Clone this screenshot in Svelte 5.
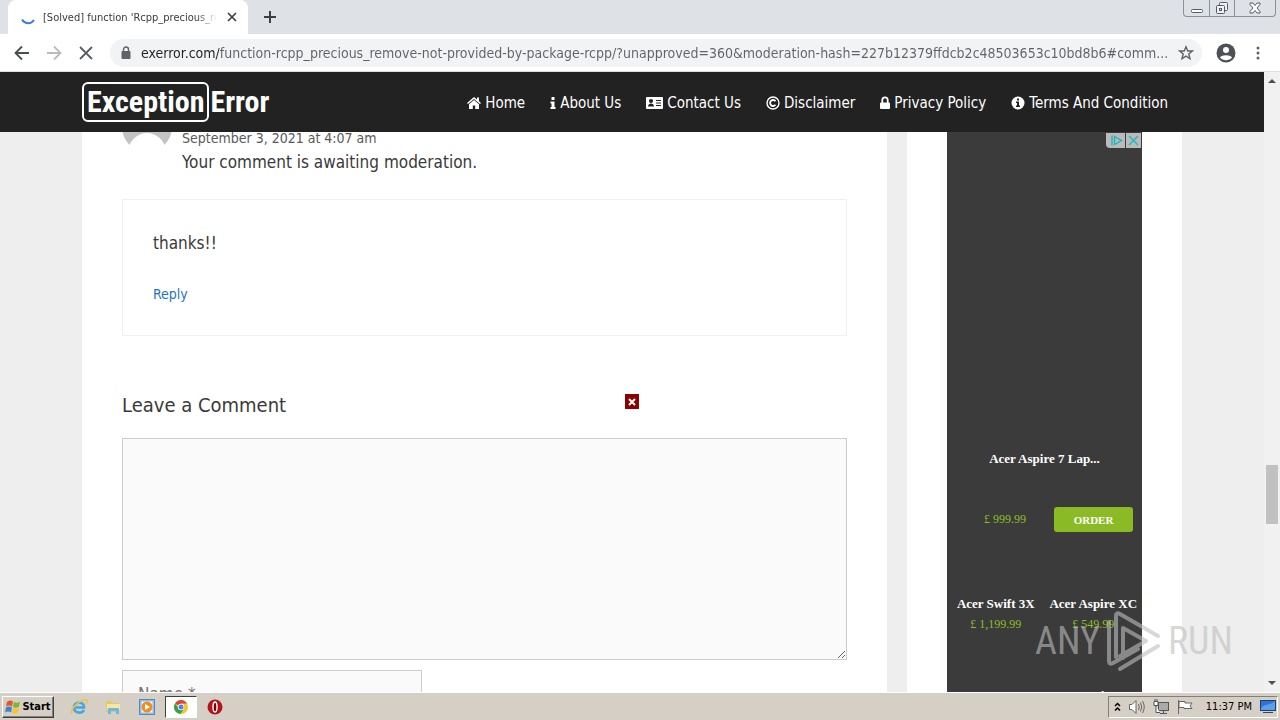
<script lang="ts">
	const navLinks = [
		{ icon: 'home', label: 'Home' },
		{ icon: 'info', label: 'About Us' },
		{ icon: 'card', label: 'Contact Us' },
		{ icon: 'copyright', label: 'Disclaimer' },
		{ icon: 'lock', label: 'Privacy Policy' },
		{ icon: 'info-circle', label: 'Terms And Condition' }
	];

	const products = [
		{ name: 'Acer Swift 3X', price: '£ 1,199.99' },
		{ name: 'Acer Aspire XC', price: '£ 549.99' }
	];

	let url = $state(
		'exerror.com/function-rcpp_precious_remove-not-provided-by-package-rcpp/?unapproved=360&moderation-hash=227b12379ffdcb2c48503653c10bd8b6#comm...'
	);
	let comment = $state('');
	let name = $state('');
</script>

<div class="desktop">
	<header class="tab-strip">
		<div class="tab">
			<svg class="spinner" viewBox="0 0 16 16" fill="none" stroke="#3b78e0" stroke-width="2">
				<path d="M2 10.5A7 7 0 0 0 14 11" />
			</svg>
			<span class="tab-title">[Solved] function 'Rcpp_precious_remove'</span>
			<button class="icon-btn" aria-label="Close tab">
				<svg width="10" height="10" viewBox="0 0 10 10" stroke="#3c4043" stroke-width="1.7">
					<path d="M1 1L9 9M9 1L1 9" />
				</svg>
			</button>
		</div>
		<button class="icon-btn new-tab" aria-label="New tab">
			<svg width="12" height="12" viewBox="0 0 12 12" stroke="#3c4043" stroke-width="2">
				<path d="M6 0V12M0 6H12" />
			</svg>
		</button>
		<div class="window-controls">
			<button aria-label="Minimize">
				<svg width="12" height="12" viewBox="0 0 12 12" fill="#fff" stroke="#555b66">
					<rect x="0.5" y="7.5" width="11" height="3" rx="1" />
				</svg>
			</button>
			<button aria-label="Restore">
				<svg width="14" height="14" viewBox="0 0 14 14" fill="#eef0f4" stroke="#555b66">
					<rect x="4.5" y="1.5" width="8" height="8" rx="1" />
					<rect x="1.5" y="4.5" width="8" height="8" rx="1" />
					<rect x="4.5" y="7.5" width="2" height="2" />
				</svg>
			</button>
			<button class="wide" aria-label="Close">
				<svg width="12" height="12" viewBox="0 0 12 12" fill="#fff" stroke="#555b66">
					<path d="M1 1H4L6 3.5L8 1H11V2.5L8 6L11 9.5V11H8L6 8.5L4 11H1V9.5L4 6L1 2.5Z" />
				</svg>
			</button>
		</div>
	</header>

	<div class="toolbar">
		<button class="icon-btn" aria-label="Back">
			<svg width="16" height="16" viewBox="0 0 16 16" fill="none" stroke="#4a4d51" stroke-width="1.8">
				<path d="M15 8H2M8 1.5L1.5 8L8 14.5" />
			</svg>
		</button>
		<button class="icon-btn" aria-label="Forward">
			<svg width="16" height="16" viewBox="0 0 16 16" fill="none" stroke="#b9bbbe" stroke-width="1.8">
				<path d="M1 8H14M8 1.5L14.5 8L8 14.5" />
			</svg>
		</button>
		<button class="icon-btn" aria-label="Stop loading">
			<svg width="16" height="16" viewBox="0 0 16 16" fill="none" stroke="#5a5d61" stroke-width="1.8">
				<path d="M2 2L14 14M14 2L2 14" />
			</svg>
		</button>
		<div class="address">
			<svg width="10" height="14" viewBox="0 0 10 14">
				<path d="M2.5 6V3.5a2.5 2.5 0 0 1 5 0V6" fill="none" stroke="#5f6368" stroke-width="1.4" />
				<rect x="0.5" y="5" width="9" height="8" rx="1" fill="#5f6368" />
			</svg>
			<input type="text" aria-label="Address" bind:value={url} />
			<button class="icon-btn" aria-label="Bookmark">
				<svg width="16" height="16" viewBox="0 0 16 16" fill="none" stroke="#5f6368" stroke-width="1.4">
					<path d="M8 1.8L9.8 6H14.3L10.8 9L12 13.8L8 11.2L4 13.8L5.2 9L1.7 6H6.2Z" />
				</svg>
			</button>
		</div>
		<button class="icon-btn" aria-label="Profile">
			<svg width="20" height="20" viewBox="0 0 20 20">
				<circle cx="10" cy="10" r="9.5" fill="#4d5054" />
				<circle cx="10" cy="7" r="3" fill="#fff" />
				<path d="M4 14.5C5.5 11.5 14.5 11.5 16 14.5C13 18 7 18 4 14.5Z" fill="#fff" />
			</svg>
		</button>
		<button class="icon-btn" aria-label="Menu">
			<svg width="4" height="14" viewBox="0 0 4 14" fill="#5f6368">
				<circle cx="2" cy="2" r="1.5" /><circle cx="2" cy="7" r="1.5" /><circle cx="2" cy="12" r="1.5" />
			</svg>
		</button>
	</div>

	<div class="viewport">
		<div class="page">
			<div class="site-header">
				<div class="container header-inner">
					<a class="logo" href="#home"><span class="boxed">Exception</span><span>Error</span></a>
					<nav>
						{#each navLinks as link}
							<a href="#{link.icon}">
								{#if link.icon === 'home'}
									<svg width="14" height="14" viewBox="0 0 14 14" fill="#fff">
										<path d="M7 1L0 7L1 8L7 3L13 8L14 7L12 5.3V1.5H10V3.6Z" />
										<path d="M7 4L2 8.2V13H5.8V9.5H8.2V13H12V8.2Z" />
									</svg>
								{:else if link.icon === 'info'}
									<svg width="6" height="14" viewBox="0 0 6 14" fill="#fff">
										<path d="M1.5 1H4.5V4H1.5ZM0.5 5.5H4.5V11H5.5V13H0.5V11H1.5V7.5H0.5Z" />
									</svg>
								{:else if link.icon === 'card'}
									<svg width="17" height="14" viewBox="0 0 17 14">
										<rect y="1" width="17" height="12" rx="1" fill="#fff" />
										<circle cx="5" cy="5" r="2" fill="#222" />
										<path d="M2 10.5C2 6.5 8 6.5 8 10.5Z" fill="#222" />
										<path d="M10 4.5H15M10 7H15M10 9.5H15" stroke="#222" />
									</svg>
								{:else if link.icon === 'copyright'}
									<svg width="14" height="14" viewBox="0 0 14 14" fill="none" stroke="#fff" stroke-width="1.4">
										<circle cx="7" cy="7" r="6" />
										<path d="M9.5 5.2A3 3 0 1 0 9.5 8.8" stroke-width="1.8" />
									</svg>
								{:else if link.icon === 'lock'}
									<svg width="10" height="14" viewBox="0 0 10 14">
										<path d="M2.3 7V4a2.7 2.7 0 0 1 5.4 0V7" fill="none" stroke="#fff" stroke-width="1.8" />
										<rect y="6.5" width="10" height="6.5" rx="1" fill="#fff" />
									</svg>
								{:else}
									<svg width="14" height="14" viewBox="0 0 14 14">
										<circle cx="7" cy="7" r="6.5" fill="#fff" />
										<path d="M6 2.5H8V4.5H6ZM5 5.5H8V9.5H9V11H5V9.5H6V7H5Z" fill="#222" />
									</svg>
								{/if}
								<span>{link.label}</span>
							</a>
						{/each}
					</nav>
				</div>
			</div>

			<div class="container columns">
				<main>
					<div class="comment-meta">
						<svg class="avatar" viewBox="0 0 50 50">
							<circle cx="25" cy="25" r="25" fill="#c3c3c3" />
							<circle cx="25" cy="19" r="10" fill="#fff" />
							<path d="M5 52C8 24 42 24 45 52Z" fill="#fff" />
						</svg>
						<div>
							<time>September 3, 2021 at 4:07 am</time>
							<p class="awaiting">Your comment is awaiting moderation.</p>
						</div>
					</div>
					<div class="comment-body">
						<p>thanks!!</p>
						<a href="#respond">Reply</a>
					</div>
					<div class="respond-title">
						<h3>Leave a Comment</h3>
						<button class="ad-close" aria-label="Close ad">
							<svg width="8" height="8" viewBox="0 0 8 8" stroke="#fff" stroke-width="2">
								<path d="M1 1L7 7M7 1L1 7" />
							</svg>
						</button>
					</div>
					<form>
						<textarea aria-label="Comment" bind:value={comment}></textarea>
						<input type="text" aria-label="Name" placeholder="Name *" bind:value={name} />
					</form>
				</main>

				<aside>
					<div class="ad">
						<div class="ad-badges">
							<button aria-label="Ad choices">
								<svg width="16" height="13" viewBox="0 0 16 13" fill="none" stroke="#20b5c0" stroke-width="1.4">
									<path d="M4 1.5V11.5M6.5 2.5V10.5L13.5 6.5Z" />
								</svg>
							</button>
							<button aria-label="Close">
								<svg width="13" height="13" viewBox="0 0 13 13" stroke="#20b5c0" stroke-width="1.4">
									<path d="M2 2L11 11M11 2L2 11" />
								</svg>
							</button>
						</div>
						<strong class="ad-title">Acer Aspire 7 Lap...</strong>
						<div class="ad-order">
							<span class="price">£ 999.99</span>
							<button class="order">ORDER</button>
						</div>
						<div class="ad-products">
							{#each products as product}
								<div class="product">
									<strong>{product.name}</strong>
									<span class="price">{product.price}</span>
								</div>
							{/each}
						</div>
						<div class="ad-products next">
							<strong>Acer</strong>
							<strong>Acer Spin SP</strong>
						</div>
					</div>
				</aside>
			</div>
		</div>

		<div class="scrollbar">
			<svg width="8" height="4" viewBox="0 0 8 4" fill="#505050"><path d="M0 4L4 0L8 4Z" /></svg>
			<div class="thumb"></div>
			<svg width="8" height="4" viewBox="0 0 8 4" fill="#505050"><path d="M0 0L4 4L8 0Z" /></svg>
		</div>

		<div class="watermark">
			<span>ANY</span>
			<svg width="56" height="62" viewBox="0 0 56 62" fill="none" stroke="currentColor" stroke-width="4" stroke-linejoin="round" stroke-linecap="round">
				<path d="M10 47V6Q10 2 14 4L52 26M3 12V51Q3 55 7 53L32 39M17 48V18L40 31L14 46M14 59L52 36" />
			</svg>
			<span>RUN</span>
		</div>
	</div>

	<footer class="taskbar">
		<button class="start">
			<svg width="16" height="16" viewBox="0 0 16 16">
				<path d="M2 3C4 1 6 1 8 2.5L7 7.5C5 6 3 6 1 7.5Z" fill="#e8542b" />
				<path d="M9 2.8C11 4 13 4 15 2.5L14 7.5C12 9 10 9 8 7.8Z" fill="#7db72f" />
				<path d="M1 8.5C3 7 5 7 7 8.5L6 13.5C4 12 2 12 0 13.5Z" fill="#3a83d6" />
				<path d="M8 9C10 10 12 10 14 8.7L13 13.5C11 15 9 15 7 14Z" fill="#f8c42c" />
			</svg>
			<span>Start</span>
		</button>
		<div class="launchers">
			<button aria-label="Internet Explorer">
				<svg width="18" height="18" viewBox="0 0 18 18" fill="none">
					<path d="M4 9.5H14C14.5 3 4 3 4 9.5C4 15.5 12 16 14 12" stroke="#43a7e0" stroke-width="2.6" />
					<path d="M2 16C-1 12 10 1 16 2C18 2.5 17 5 16 6" stroke="#e9c34a" stroke-width="1.5" />
				</svg>
			</button>
			<button aria-label="Explorer">
				<svg width="18" height="18" viewBox="0 0 18 18">
					<path d="M2 3H7L8 5H15V14H2Z" fill="#e5c765" />
					<path d="M3 6H16V12H3Z" fill="#f6e7a4" />
					<path d="M4 16V10H15V16H12V13H7V16Z" fill="#6fb8e2" />
				</svg>
			</button>
			<button aria-label="Media Player">
				<svg width="16" height="16" viewBox="0 0 16 16">
					<rect x="0.5" y="0.5" width="15" height="15" fill="#8dbde8" stroke="#4d8bc7" />
					<rect x="2.5" y="2.5" width="11" height="11" fill="#f4f8fc" />
					<circle cx="8" cy="8" r="5.5" fill="#f38b1d" />
					<path d="M6 5V11L11 8Z" fill="#fff" />
				</svg>
			</button>
			<button class="active" aria-label="Chrome">
				<svg width="14" height="14" viewBox="0 0 14 14">
					<circle cx="7" cy="7" r="7" fill="#f6c52c" />
					<path d="M7 7L1 3.4A7 7 0 0 1 13.1 3.6H7Z" fill="#dd4437" />
					<path d="M1 3.4A7 7 0 0 0 6.5 14L10 8.5L5 9Z" fill="#35a050" />
					<circle cx="7" cy="7" r="3.2" fill="#fff" />
					<circle cx="7" cy="7" r="2.5" fill="#4385f3" />
				</svg>
			</button>
			<button aria-label="Opera">
				<svg width="16" height="16" viewBox="0 0 16 16">
					<circle cx="8" cy="8" r="7.5" fill="#b5131a" />
					<ellipse cx="8" cy="8" rx="2" ry="5" fill="#6b0709" stroke="#fff" stroke-width="1.4" />
				</svg>
			</button>
		</div>
		<div class="tray">
			<svg width="7" height="10" viewBox="0 0 7 10" fill="none" stroke="#000" stroke-width="1.5">
				<path d="M1 4L3.5 1.5L6 4M1 8.5L3.5 6L6 8.5" />
			</svg>
			<svg width="16" height="16" viewBox="0 0 16 16" fill="#fff" stroke="#666">
				<path d="M0.5 5.5H3L7 1.5V14.5L3 10.5H0.5Z" />
				<path d="M9.5 5Q11 8 9.5 11M11.5 3.5Q14 8 11.5 12.5M13.5 2Q17 8 13.5 14" fill="none" />
			</svg>
			<svg width="16" height="16" viewBox="0 0 16 16" fill="#fff" stroke="#555">
				<rect x="5.5" y="3.5" width="10" height="8" fill="#aaa" />
				<path d="M7 14.5H14M10.5 12V14M1 2.5H5V6.5H1ZM2 0V2M4 0V2M3 7V13.5H7" />
			</svg>
			<svg width="16" height="16" viewBox="0 0 16 16" fill="#fff" stroke="#666">
				<path d="M1.5 1V15M2 2.5H8V4H15L13 7L15 9.5H7V8.5H2Z" />
			</svg>
			<span class="clock">11:37 PM</span>
			<svg width="16" height="14" viewBox="0 0 16 14">
				<rect x="0.5" y="0.5" width="15" height="10" fill="#2f74d0" stroke="#16407f" />
				<path d="M1 8C5 3 10 6 15 1V10H1Z" fill="#5da0ea" />
				<path d="M3 12.5H13" stroke="#444" />
			</svg>
		</div>
	</footer>
</div>

<style>
	:global(body) {
		margin: 0;
		overflow: hidden;
	}

	.desktop {
		display: flex;
		flex-direction: column;
		height: 100vh;
		color: #3a3a3a;
		font-family: Tahoma, 'DejaVu Sans Condensed', 'Open Sans', sans-serif;
	}

	button {
		padding: 0;
		border: none;
		background: none;
		font-family: inherit;
	}

	svg {
		flex: none;
	}

	.icon-btn {
		display: flex;
		align-items: center;
		justify-content: center;
		width: 16px;
		height: 16px;
	}

	.tab-strip {
		display: flex;
		align-items: center;
		height: 34px;
		background: #dee1e6;
	}

	.tab {
		box-sizing: border-box;
		display: flex;
		align-items: center;
		gap: 7px;
		width: 240px;
		height: 34px;
		margin-left: 8px;
		padding: 0 8px 0 12px;
		background: #fff;
		border-radius: 8px 8px 0 0;
	}

	.spinner {
		width: 16px;
		height: 16px;
	}

	.tab-title {
		flex: 1;
		overflow: hidden;
		font-size: 11px;
		white-space: nowrap;
		mask-image: linear-gradient(to right, #000 88%, transparent);
	}

	.new-tab {
		margin-left: 14px;
	}

	.window-controls {
		display: flex;
		align-self: flex-start;
		height: 16px;
		margin: 0 4px 0 auto;
		border: 1px solid #8b9099;
		border-top: none;
		border-radius: 0 0 4px 4px;
	}

	.window-controls button {
		display: flex;
		align-items: center;
		justify-content: center;
		width: 25px;
	}

	.window-controls button + button {
		border-left: 1px solid #8b9099;
	}

	.window-controls .wide {
		width: 41px;
	}

	.toolbar {
		display: flex;
		align-items: center;
		gap: 16px;
		height: 37px;
		padding: 0 14px;
		border-bottom: 1px solid #dcdde0;
		background: #fff;
	}

	.address {
		flex: 1;
		display: flex;
		align-items: center;
		gap: 10px;
		height: 28px;
		padding: 0 8px 0 11px;
		border-radius: 14px;
		background: #f1f3f4;
	}

	/* the host part of the URL is darker than the rest */
	.address input {
		flex: 1;
		min-width: 0;
		padding: 0;
		border: none;
		outline: none;
		font-family: inherit;
		font-size: 14px;
		color: transparent;
		background: linear-gradient(to right, #202124 78px, #5f6368 78px);
		background-clip: text;
	}

	.viewport {
		position: relative;
		flex: 1;
		display: flex;
		min-height: 0;
	}

	.page {
		flex: 1;
		display: flex;
		flex-direction: column;
		overflow: hidden;
		background: #eee;
	}

	.container {
		box-sizing: border-box;
		width: 100%;
		max-width: 1100px;
		margin: 0 auto;
	}

	.site-header {
		position: relative;
		z-index: 1;
		flex: none;
		background: #222;
	}

	.header-inner {
		display: flex;
		align-items: center;
		justify-content: space-between;
		height: 60px;
		padding-right: 14px;
	}

	.logo {
		display: flex;
		align-items: center;
		gap: 1px;
		color: #fff;
		font-family: 'Liberation Sans Narrow', 'Roboto Condensed', 'Liberation Sans', sans-serif;
		font-size: 30px;
		font-weight: 700;
		line-height: 36px;
		text-decoration: none;
	}

	.boxed {
		padding: 0 3px;
		border: 2px solid #fff;
		border-radius: 6px;
	}

	nav {
		display: flex;
		gap: 25px;
		padding-top: 2px;
	}

	nav a {
		display: flex;
		align-items: center;
		gap: 4px;
		color: #fff;
		font-size: 15px;
		text-decoration: none;
		white-space: nowrap;
	}

	.columns {
		display: flex;
		gap: 20px;
		height: 100%;
		min-height: 0;
	}

	main {
		flex: 1;
		min-width: 0;
		padding: 0 40px;
		background: #fff;
	}

	/* the page is scrolled, so the first row starts under the header */
	.comment-meta {
		display: flex;
		gap: 10px;
		margin-top: -30px;
	}

	.avatar {
		width: 50px;
		height: 50px;
	}

	.comment-meta time {
		display: block;
		padding-top: 24px;
		font-size: 14px;
		line-height: 24px;
		color: #595959;
	}

	.awaiting {
		margin: 0;
		font-size: 17px;
		line-height: 24px;
	}

	.comment-body {
		margin-top: 25px;
		padding: 30px;
		border: 1px solid #f0f0f0;
	}

	.comment-body p {
		margin: 0 0 27px;
		font-size: 17px;
		line-height: 26px;
	}

	.comment-body a {
		display: block;
		font-size: 14px;
		line-height: 22px;
		color: #1e73be;
		text-decoration: none;
	}

	.respond-title {
		position: relative;
		margin: 54px 0 18px;
	}

	h3 {
		margin: 0;
		font-size: 20px;
		font-weight: 400;
		line-height: 30px;
	}

	.ad-close {
		position: absolute;
		top: 4px;
		left: 503px;
		display: flex;
		align-items: center;
		justify-content: center;
		width: 14px;
		height: 15px;
		background: #8b0000;
	}

	form {
		display: flex;
		flex-direction: column;
		align-items: flex-start;
		gap: 10px;
	}

	textarea,
	form input {
		box-sizing: border-box;
		border: 1px solid #ccc;
		border-radius: 0;
		background: #fafafa;
		color: #666;
		font-family: inherit;
		font-size: 17px;
	}

	textarea {
		width: 100%;
		height: 222px;
		padding: 10px 15px;
	}

	form input {
		width: 300px;
		height: 48px;
		padding: 10px 15px;
	}

	aside {
		box-sizing: border-box;
		width: 275px;
		padding: 0 40px;
		background: #fff;
	}

	.ad {
		height: 100%;
		background: #3b3b3b;
		color: #fff;
		font-family: 'Liberation Serif', serif;
		font-size: 13px;
		text-align: center;
		overflow: hidden;
	}

	.ad-badges {
		display: flex;
		justify-content: flex-end;
		gap: 1px;
		padding: 1px 1px 0 0;
	}

	.ad-badges button {
		display: flex;
		align-items: center;
		justify-content: center;
		width: 19px;
		height: 15px;
		background: #bbb;
	}

	.ad-badges button:first-child {
		border-bottom-left-radius: 4px;
	}

	.ad-badges button + button {
		width: 15px;
	}

	.ad-title {
		display: block;
		margin-top: 301px;
		line-height: 20px;
	}

	.ad-order {
		display: flex;
		align-items: center;
		justify-content: flex-end;
		gap: 28px;
		margin-top: 38px;
		padding-right: 9px;
	}

	.price {
		color: #8dbf27;
		font-size: 12px;
	}

	.order {
		width: 79px;
		height: 25px;
		border-radius: 3px;
		background: #8aba24;
		color: #fff;
		font-size: 11px;
		font-weight: 700;
	}

	.ad-products {
		display: grid;
		grid-template-columns: 1fr 1fr;
		line-height: 20px;
		margin-top: 62px;
		white-space: nowrap;
	}

	.product {
		display: flex;
		flex-direction: column;
		align-items: center;
	}

	.ad-products.next {
		margin-top: 52px;
	}

	.scrollbar {
		display: flex;
		flex-direction: column;
		align-items: center;
		width: 16px;
		padding: 7px 0;
		box-sizing: border-box;
		background: #f1f1f1;
	}

	.scrollbar svg:last-child {
		margin-top: auto;
	}

	.thumb {
		width: 12px;
		height: 59px;
		margin-top: 382px;
		background: #c1c1c1;
	}

	.watermark {
		position: absolute;
		right: 47px;
		bottom: 20px;
		z-index: 2;
		display: flex;
		align-items: center;
		gap: 6px;
		color: rgba(190, 190, 190, 0.6);
		font-family: 'Liberation Sans Narrow', 'Roboto Condensed', 'Liberation Sans', sans-serif;
		font-size: 38px;
		pointer-events: none;
	}

	.taskbar {
		box-sizing: border-box;
		display: flex;
		align-items: center;
		height: 28px;
		padding: 0 2px;
		border-top: 1px solid #fff;
		background: #d6cfc6;
		color: #000;
	}

	.start {
		display: flex;
		align-items: center;
		justify-content: center;
		gap: 1px;
		width: 52px;
		height: 22px;
		border: 1px solid;
		border-color: #fff #404040 #404040 #fff;
		font-size: 11px;
		font-weight: 700;
		box-shadow: inset -1px -1px #848077;
	}

	.launchers {
		display: flex;
		align-items: center;
		gap: 2px;
		margin-left: 9px;
	}

	.launchers button {
		display: flex;
		align-items: center;
		justify-content: center;
		width: 32px;
		height: 22px;
	}

	.launchers .active {
		box-sizing: border-box;
		border: 1px solid;
		border-color: #404040 #fff #fff #404040;
		background: #fff;
	}

	.tray {
		box-sizing: border-box;
		display: flex;
		align-items: center;
		gap: 8px;
		height: 22px;
		margin-left: auto;
		padding: 0 1px 0 5px;
		border: 1px solid;
		border-color: #848077 #fff #fff #848077;
	}

	.clock {
		margin-left: 5px;
		font-size: 11px;
	}
</style>
